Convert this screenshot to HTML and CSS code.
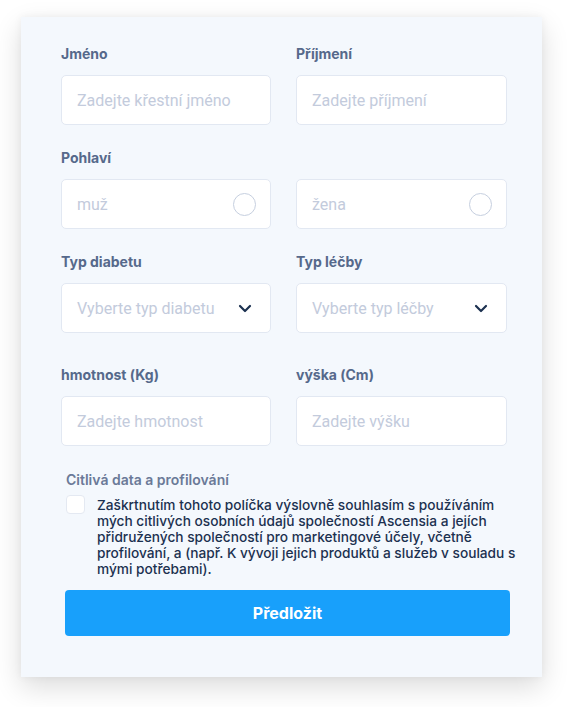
FILE: index.html
```html
<!DOCTYPE html>
<html lang="cs">
    <head>
        <meta charset="UTF-8">
        <title>Registrace</title>
        <link rel="stylesheet" href="styles.css">
    </head>
    <body>
        <form class="card">
            <div class="grid">
                <div class="field">
                    <label for="jmeno">Jméno</label>
                    <input class="box" type="text" id="jmeno" placeholder="Zadejte křestní jméno">
                </div>
                <div class="field">
                    <label for="prijmeni">Příjmení</label>
                    <input class="box" type="text" id="prijmeni" placeholder="Zadejte příjmení">
                </div>

                <div class="field span">
                    <label>Pohlaví</label>
                    <div class="pair">
                        <div class="box option"><span>muž</span><span class="radio"></span></div>
                        <div class="box option"><span>žena</span><span class="radio"></span></div>
                    </div>
                </div>

                <div class="field">
                    <label>Typ diabetu</label>
                    <div class="box option"><span>Vyberte typ diabetu</span>
                        <svg class="chev" width="14" height="9" viewBox="0 0 14 9"><path d="M2 2l5 5 5-5" fill="none" stroke="#1c3150" stroke-width="2.2" stroke-linecap="round" stroke-linejoin="round"/></svg>
                    </div>
                </div>
                <div class="field">
                    <label>Typ léčby</label>
                    <div class="box option"><span>Vyberte typ léčby</span>
                        <svg class="chev" width="14" height="9" viewBox="0 0 14 9"><path d="M2 2l5 5 5-5" fill="none" stroke="#1c3150" stroke-width="2.2" stroke-linecap="round" stroke-linejoin="round"/></svg>
                    </div>
                </div>

                <div class="field far">
                    <label for="hmotnost">hmotnost (Kg)</label>
                    <input class="box" type="text" id="hmotnost" placeholder="Zadejte hmotnost">
                </div>
                <div class="field far">
                    <label for="vyska">výška (Cm)</label>
                    <input class="box" type="text" id="vyska" placeholder="Zadejte výšku">
                </div>
            </div>

            <div class="consent">
                <div class="consent-title">Citlivá data a profilování</div>
                <div class="consent-row">
                    <span class="check"></span>
                    <p>Zaškrtnutím tohoto políčka výslovně souhlasím s používáním mých citlivých osobních údajů společností Ascensia a jejích přidružených společností pro marketingové účely, včetně profilování, a (např. K vývoji jejich produktů a služeb v souladu s mými potřebami).</p>
                </div>
            </div>

            <button type="submit">Předložit</button>
        </form>
    </body>
</html>
```

FILE: styles.css
```css
body { margin: 0; padding-bottom: 30px; background: #fff; font-family: Inter, "Noto Sans", sans-serif; }

.card {
    box-sizing: border-box;
    width: 521px;
    height: 660px;
    margin: 17px 0 0 21px;
    padding: 28px 32px 0 40px;
    background: #f4f8fd;
    box-shadow: 0 10px 26px rgba(0, 0, 0, 0.14), 0 0 8px rgba(0, 0, 0, 0.05);
}

.grid {
    display: grid;
    grid-template-columns: 210px 211px;
    column-gap: 25px;
    row-gap: 24px;
}
.field { display: flex; flex-direction: column; }
.field.span { grid-column: span 2; }
.field.far { margin-top: 9px; }

label {
    display: block;
    font-size: 14px;
    line-height: 17px;
    font-weight: 700;
    color: #56698b;
    margin-bottom: 13px;
}

.box {
    box-sizing: border-box;
    height: 50px;
    width: 100%;
    padding: 0 15px;
    background: #fff;
    border: 1px solid #e2e8f2;
    border-radius: 5px;
    font-family: Roboto, sans-serif;
    font-size: 16px;
    color: #c3cbdc;
    outline: none;
}
.box::placeholder { color: #c3cbdc; }

.pair { display: grid; grid-template-columns: 210px 211px; column-gap: 25px; }
.option { display: flex; align-items: center; justify-content: space-between; }
.radio {
    width: 21px;
    height: 21px;
    border: 1px solid #c6cfdf;
    border-radius: 50%;
    margin-right: -1px;
}
.chev { margin-right: 3px; }

.consent { margin: 25px 0 0 5px; }
.consent-title {
    font-size: 14px;
    line-height: 17px;
    font-weight: 600;
    color: #6b7a98;
}
.consent-row { display: flex; gap: 12px; margin-top: 7px; }
.check {
    flex: none;
    width: 17px;
    height: 17px;
    background: #fff;
    border: 1px solid #e4e9f2;
    border-radius: 4px;
}
.consent-row p {
    flex: none;
    margin: 2px 0 0;
    width: 432px;
    font-size: 13.7px;
    line-height: 16px;
    font-weight: 500;
    color: #1c3150;
}

button {
    display: block;
    width: 445px;
    height: 46px;
    margin: 13px 0 0 4px;
    border: 0;
    border-radius: 4px;
    background: #18a0fb;
    color: #fff;
    font-family: inherit;
    font-size: 16px;
    font-weight: 700;
}
```
